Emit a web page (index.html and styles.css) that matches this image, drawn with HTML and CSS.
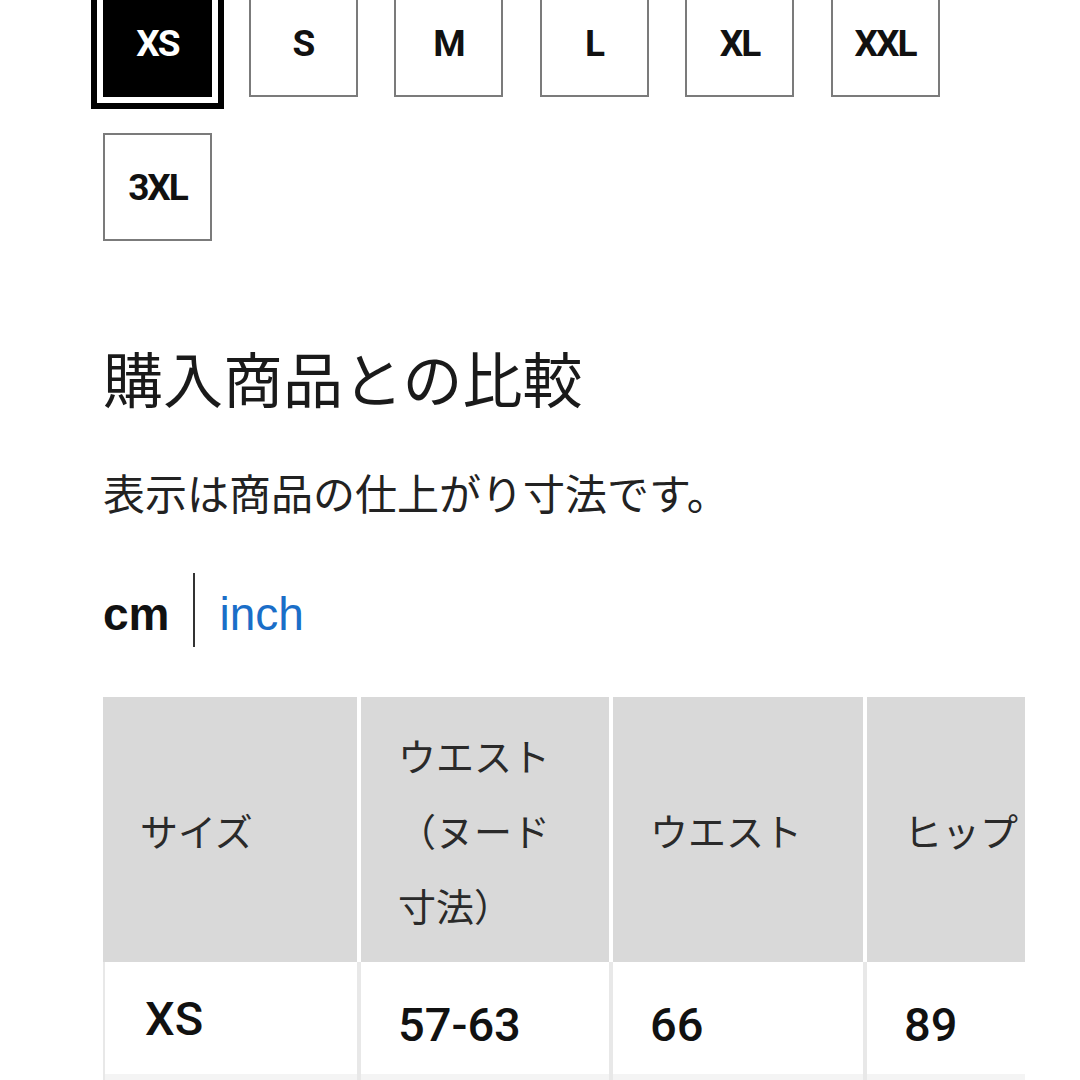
FILE: index.html
```html
<!DOCTYPE html>
<html lang="ja">
<head>
    <meta charset="UTF-8">
    <title>購入商品との比較</title>
    <link rel="stylesheet" href="styles.css">
</head>
<body>
    <div class="page">
        <!-- サイズ選択 -->
        <div class="sizes">
            <div class="size is-selected">XS</div>
            <div class="size">S</div>
            <div class="size">M</div>
            <div class="size">L</div>
            <div class="size">XL</div>
            <div class="size">XXL</div>
            <div class="size">3XL</div>
        </div>

        <h2 class="title">購入商品との比較</h2>
        <p class="note">表示は商品の仕上がり寸法です。</p>

        <div class="units">
            <span class="unit is-active">cm</span>
            <span class="sep"></span>
            <a class="unit link">inch</a>
        </div>

        <div class="table-wrap">
            <table class="size-table">
                <colgroup>
                    <col class="c1">
                    <col class="c2">
                    <col class="c3">
                    <col class="c4">
                </colgroup>
                <thead>
                    <tr>
                        <th>サイズ</th>
                        <th>ウエスト（ヌード寸法）</th>
                        <th>ウエスト</th>
                        <th>ヒップ</th>
                    </tr>
                </thead>
                <tbody>
                    <tr>
                        <td>XS</td>
                        <td class="num">57-63</td>
                        <td class="num">66</td>
                        <td class="num">89</td>
                    </tr>
                    <!-- 次の行（画面外） -->
                    <tr class="alt">
                        <td></td>
                        <td></td>
                        <td></td>
                        <td></td>
                    </tr>
                </tbody>
            </table>
        </div>
    </div>
</body>
</html>
```

FILE: styles.css
```css
body {
    margin: 0;
    background: #fff;
    color: #111;
    font-family: "Liberation Sans", "Noto Sans CJK JP", sans-serif;
}

.page {
    margin-top: -11px;
    padding-left: 103px;
}

/* サイズボタン */
.sizes {
    display: grid;
    grid-template-columns: repeat(6, 109px);
    column-gap: 36.5px;
    row-gap: 36px;
}

.size {
    box-sizing: border-box;
    height: 108px;
    border: 2px solid #7b7b7b;
    display: flex;
    align-items: center;
    justify-content: center;
    font-family: Roboto, sans-serif;
    font-weight: 700;
    font-size: 37px;
    letter-spacing: -2px;
    color: #111;
}

.size.is-selected {
    background: #000;
    border-color: #000;
    color: #fff;
    box-shadow: 0 0 0 6px #fff, 0 0 0 12px #000;
}

.title {
    margin: 106px 0 0;
    font-family: "Noto Sans CJK JP", sans-serif;
    font-weight: 400;
    font-size: 60px;
    line-height: 60px;
    color: #1a1a1a;
}

.note {
    margin: 64px 0 0;
    font-family: "Noto Sans CJK JP", sans-serif;
    font-size: 42px;
    line-height: 42px;
    color: #222;
}

/* 単位切り替え */
.units {
    margin-top: 60px;
    height: 74px;
    display: flex;
    align-items: center;
    gap: 24px;
}

.unit {
    margin-top: 8px;
    font-size: 46px;
}

.unit.is-active {
    font-weight: 700;
    color: #111;
}

.unit.link {
    color: #1a6ec8;
}

.sep {
    width: 2px;
    align-self: stretch;
    background: #333;
}

/* サイズ表 */
.table-wrap {
    margin-top: 50px;
    width: 922px;
    overflow: hidden;
}

.size-table {
    border-collapse: separate;
    border-spacing: 0;
    table-layout: fixed;
    width: 1030px;
}

.c1 { width: 258px; }
.c2 { width: 252px; }
.c3 { width: 254px; }
.c4 { width: 266px; }

th, td {
    box-sizing: border-box;
    padding: 0 37px;
    text-align: left;
    vertical-align: middle;
}

th {
    height: 265px;
    background: #d9d9d9;
    border-right: 4px solid #fff;
    font-family: "Noto Sans CJK JP", sans-serif;
    font-weight: 400;
    font-size: 38px;
    line-height: 75px;
    color: #2a2a2a;
}

td {
    height: 112px;
    border-right: 4px solid #e8e8e8;
    font-family: Roboto, sans-serif;
    font-weight: 500;
    font-size: 47px;
    color: #111;
}

td:first-child {
    border-left: 2px solid #e8e8e8;
    padding-left: 40px;
}

td.num {
    padding-top: 12px;
}

tr.alt td {
    background: #f4f4f4;
}
```
